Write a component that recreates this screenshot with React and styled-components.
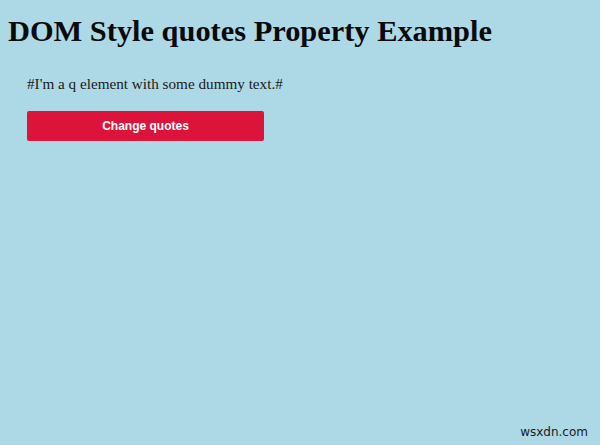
import React from "react";
import styled, { createGlobalStyle } from "styled-components";

const Global = createGlobalStyle`
  html, body { margin: 0; padding: 0; }
  body {
    background: #add8e6;
    font-family: "Liberation Serif", "Times New Roman", serif;
    color: #111;
    width: 600px;
    height: 445px;
    overflow: hidden;
  }
`;

const Page = styled.div`
  position: relative;
  width: 600px;
  height: 445px;
  padding: 14px 8px 0 8px;
  box-sizing: border-box;
`;

const Title = styled.h1`
  margin: 0;
  font-size: 30.4px;
  font-weight: bold;
  line-height: 35px;
  color: #0a0a0a;
`;

const Content = styled.div`
  padding-left: 19px;
  margin-top: 26px;
  display: flex;
  flex-direction: column;
  align-items: flex-start;
`;

const Quote = styled.p`
  margin: 0;
  font-size: 15.2px;
  line-height: 18px;
  color: #1a1a1a;
`;

const Button = styled.button`
  margin-top: 18px;
  width: 237px;
  height: 30px;
  border: none;
  border-radius: 2px;
  background: #dc143c;
  color: #fff;
  font-family: "Liberation Sans", Arial, sans-serif;
  font-weight: bold;
  font-size: 12px;
  cursor: pointer;
`;

const Watermark = styled.div`
  position: absolute;
  right: 12px;
  bottom: 6px;
  font-family: "DejaVu Sans", sans-serif;
  font-size: 12px;
  color: #1a1a1a;
`;

export default function App() {
  return (
    <>
      <Global />
      <Page>
        <Title>DOM Style quotes Property Example</Title>
        <Content>
          <Quote>#I'm a q element with some dummy text.#</Quote>
          <Button>Change quotes</Button>
        </Content>
        <Watermark>wsxdn.com</Watermark>
      </Page>
    </>
  );
}
